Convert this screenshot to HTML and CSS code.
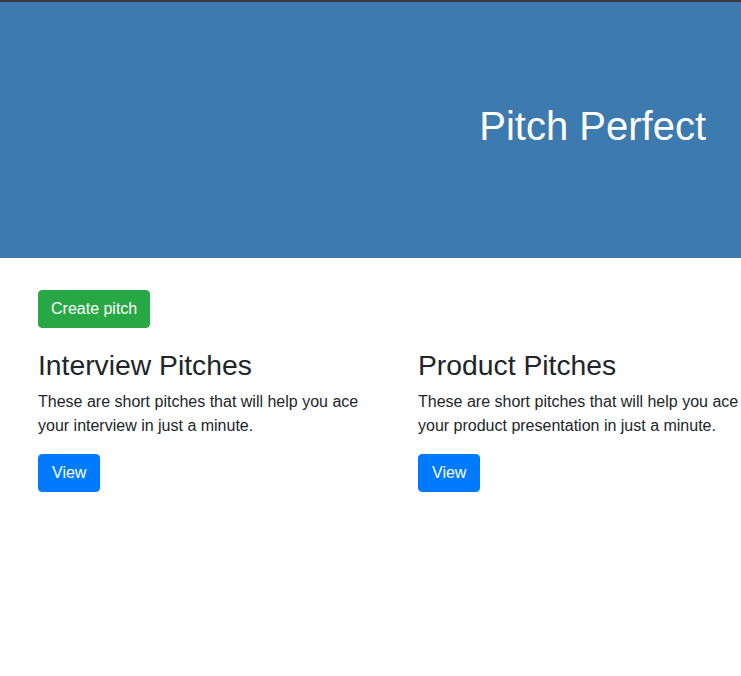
FILE: index.html
```html
<!DOCTYPE html>
<html lang="en">
<head>
<meta charset="utf-8">
<title>Pitch Perfect</title>
<link rel="stylesheet" href="styles.css">
</head>
<body>
<div class="topline"></div>
<header class="hero">
  <h1 class="hero-title">Pitch Perfect</h1>
</header>
<main class="content">
  <div class="actions">
    <button class="btn btn-green">Create pitch</button>
  </div>
  <div class="row">
    <section class="col">
      <h3 class="col-title">Interview Pitches</h3>
      <p class="col-text">These are short pitches that will help you ace your interview in just a minute.</p>
      <button class="btn btn-blue">View</button>
    </section>
    <section class="col">
      <h3 class="col-title">Product Pitches</h3>
      <p class="col-text">These are short pitches that will help you ace your product presentation in just a minute.</p>
      <button class="btn btn-blue">View</button>
    </section>
  </div>
</main>
</body>
</html>
```
FILE: styles.css
```css
* { box-sizing: border-box; }
html, body { margin: 0; padding: 0; }
body {
  font-family: "Liberation Sans", Arial, sans-serif;
  font-size: 16px;
  line-height: 1.5;
  color: #212529;
  background: #fff;
  overflow: hidden;
}
.topline { height: 2px; background: #343a40; }
.hero {
  height: 256px;
  background: #3c7ab0;
  display: flex;
  justify-content: flex-end;
  align-items: flex-start;
  padding: 100px 35px 0 0;
}
.hero-title {
  margin: 0;
  font-size: 40px;
  font-weight: 400;
  line-height: 1.2;
  color: #fff;
}
.content { padding: 32px 0 0 38px; width: 798px; }
.actions { margin-bottom: 21px; }
.btn {
  font-family: inherit;
  font-size: 16px;
  line-height: 24px;
  padding: 6px 12px;
  border: 1px solid transparent;
  border-radius: 4px;
  color: #fff;
  cursor: pointer;
}
.btn-green { background: #28a745; border-color: #28a745; }
.btn-blue { background: #007bff; border-color: #007bff; padding: 6px 13px; }
.row { display: flex; }
.col { width: 380px; padding-right: 30px; }
.col-title {
  margin: 0 0 7px;
  font-size: 28.3px;
  font-weight: 400;
  line-height: 1.2;
}
.col-text { margin: 0 0 16px; }
```
